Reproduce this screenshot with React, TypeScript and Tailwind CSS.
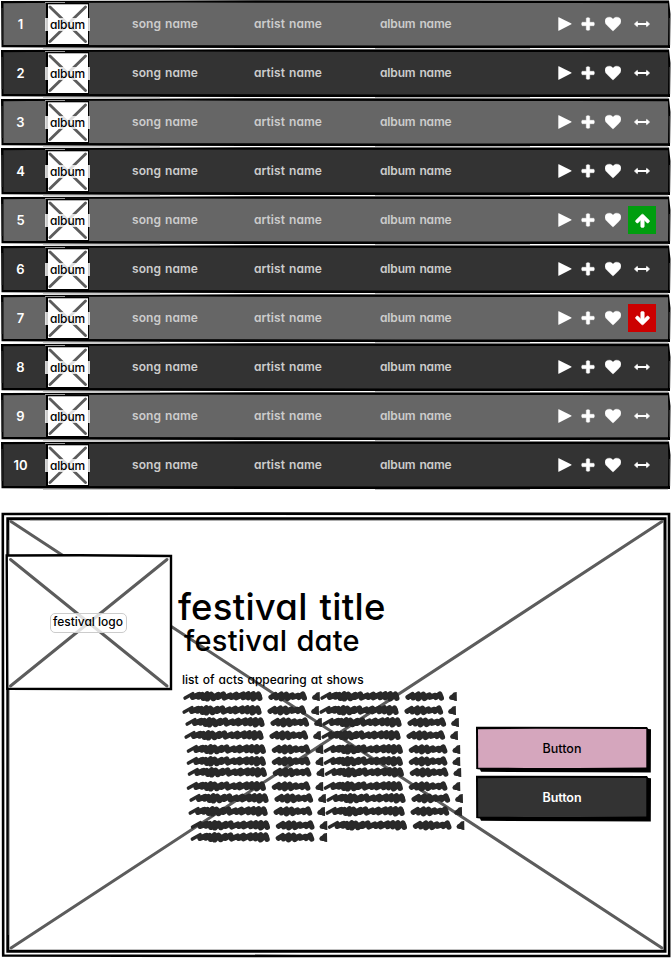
import React from "react";

const HEART =
  "M896 1664q-26 0-44-18l-624-602q-10-8-27.5-26T145 952.5 77 855 23.5 734 0 596q0-220 127-344t351-124q62 0 126.5 21.5t120 58T820 276t76 68q36-36 76-68t95.5-68.5 120-58T1314 128q224 0 351 124t127 344q0 221-229 450l-623 600q-18 18-44 18z";
const PLUS =
  "M1600 736v192q0 40-28 68t-68 28h-416v416q0 40-28 68t-68 28H800q-40 0-68-28t-28-68v-416H288q-40 0-68-28t-28-68V736q0-40 28-68t68-28h416V224q0-40 28-68t68-28h192q40 0 68 28t28 68v416h416q40 0 68 28t28 68z";
const ARROW =
  "M1611 971q0 51-37 90l-75 75q-38 38-91 38-54 0-90-38l-294-293v704q0 52-37.5 84.5T896 1664H768q-53 0-90.5-32.5T640 1547V843l-294 293q-36 38-90 38t-90-38l-75-75q-38-38-38-90 0-53 38-91l651-651q35-37 90-37 54 0 91 37l651 651q37 39 37 91z";

type Trend = "same" | "up" | "down";

const tracks: { rank: number; trend: Trend }[] = [
  { rank: 1, trend: "same" },
  { rank: 2, trend: "same" },
  { rank: 3, trend: "same" },
  { rank: 4, trend: "same" },
  { rank: 5, trend: "up" },
  { rank: 6, trend: "same" },
  { rank: 7, trend: "down" },
  { rank: 8, trend: "same" },
  { rank: 9, trend: "same" },
  { rank: 10, trend: "same" },
];

function AlbumArt() {
  return (
    <div className="relative mt-[2px] h-[44px] w-[45px] shrink-0">
      <svg className="absolute inset-0" width="45" height="44" viewBox="0 0 45 44">
        <rect x="1" y="1" width="43" height="43" fill="#000" />
        <rect x="0" y="0" width="20" height="1" fill="#999" />
        <rect x="3" y="2.3" width="40" height="39.7" fill="#fff" />
        <path d="M5 5L40.5 39.5M40.5 5L5 39.5" stroke="#5c5c5c" strokeWidth="2.9" strokeLinecap="round" />
      </svg>
      <div className="absolute left-0 top-[16px] flex h-[13px] w-[45px] items-center justify-center bg-white/80 text-[12px] font-medium leading-none tracking-[-0.1px] text-black">
        album
      </div>
    </div>
  );
}

function TrendIcon({ trend }: { trend: Trend }) {
  if (trend === "same") {
    return (
      <div className="flex h-[28px] w-[28px] items-center justify-center">
        <svg width="18" height="8" viewBox="0 0 18 8" fill="#fff" stroke="#fff" strokeWidth="1" strokeLinejoin="round">
          <path d="M1.5 4L4.3 1.5V6.5zM16.5 4L13.7 1.5V6.5zM4 3.5H14V4.5H4z" />
        </svg>
      </div>
    );
  }
  return (
    <div className={`flex h-[28px] w-[28px] items-center justify-center ${trend === "up" ? "bg-[#009e0f]" : "bg-[#cc0000]"}`}>
      <svg className={trend === "down" ? "rotate-180" : ""} width="15" height="15" viewBox="0 64 1664 1664" fill="#fff" stroke="#fff" strokeWidth="60">
        <path d={ARROW} />
      </svg>
    </div>
  );
}

function TrackRow({ rank, trend }: { rank: number; trend: Trend }) {
  const fill = rank % 2 ? "#666666" : "#333333";
  return (
    <div className="relative flex h-[49px] w-full">
      <svg className="absolute inset-0" width="671" height="49" viewBox="0 0 671 49">
        <path d="M1 1L120 .7L260 .3L669 .6L670.5 14L670 48L300 48L100 47.8L1.5 47.3z" fill="#000" />
        <path d="M3.5 3.3L30 3L180 2.6L569 3L668 3.3L668.3 20L668 45.2L400 45.5L20 45L3.5 45z" fill={fill} />
        <path d="M43 48.3H160M375 48.5H530M590 48.3H668" stroke="#aaa" strokeWidth=".8" />
        <path d="M2 8V40M669.6 18V45" stroke="#444" strokeWidth=".8" />
      </svg>
      <div className="relative flex w-full text-[12px] font-semibold leading-[18px] text-[#cccccc]">
        <div className="w-[45px] shrink-0 pr-[4px] pt-[15px] text-center text-[13px] text-white">{rank}</div>
        <AlbumArt />
        <div className="ml-[42px] w-[122px] pt-[15px] tracking-[0.05px] [word-spacing:1px]">song name</div>
        <div className="w-[126px] pt-[15px] tracking-[0.05px] [word-spacing:1px]">artist name</div>
        <div className="w-[178px] pt-[15px] tracking-[-0.15px] [word-spacing:1px]">album name</div>
        <svg className="mt-[17px]" width="14" height="14" viewBox="0 0 14 14" fill="#fff">
          <path d="M.3 .5Q.3 0 .8 .2L13.4 6.6Q13.8 7 13.4 7.3L.8 13.8Q.3 14 .3 13.5z" />
        </svg>
        <svg className="ml-[8px] mt-[16px]" width="16" height="16" viewBox="0 -64 1792 1792" fill="#fff" stroke="#fff" strokeWidth="50"><path d={PLUS} /></svg>
        <svg className="ml-[9px] mt-[16px]" width="16" height="16" viewBox="0 0 1792 1792" fill="#fff" stroke="#fff" strokeWidth="40"><path d={HEART} /></svg>
        <div className="ml-[7px] mt-[10px]"><TrendIcon trend={trend} /></div>
      </div>
    </div>
  );
}

const scribbleRows: [number, number, number][] = [
  [183.3, 696, 2],
  [182.4, 710, 2],
  [185.4, 722, 2],
  [184.4, 735, 2],
  [186.7, 749, 2],
  [186.7, 761, 2],
  [187.7, 772, 2],
  [186.7, 786, 2],
  [189.4, 798, 2],
  [188.5, 811, 2],
  [190.8, 825, 2],
  [190.6, 837, 1],
];

function ActName({ x, y }: { x: number; y: number }) {
  return (
    <g transform={`translate(${x} ${y})`} stroke="#292929" fill="none" strokeLinecap="round" strokeLinejoin="round">
      <path strokeWidth="3.6" d="M1.8 2L9.5 -2.3L9 1.5L14 -1.5" />
      <path
        strokeWidth="5.6"
        d="M9.5 1.2L16 -1.3L15 1L19 -1.3L20 2.2L24 -2L24 2.8L28 -1.5L30 2.4L35 -1.4L34.5 1.2L40 -1.8L41 1.8L47 -.8L48 1.2L53 -1.6L53 1.6L60 -1.8L60 1.4L65 -2L65 1.6L70 -2L70 2.8L75 -1.8L76.4 2.2"
      />
      <path strokeWidth="5" d="M18 0H32M63 0H76M92 0H108" />
      <path strokeWidth="5.4" d="M87.8 1.2L92 -1.3L93 1.8L98 -1.8L98 2.8L103 -1.6L104 2.4L109 -1L109.5 1.2L115 -.6L115.5 1.4L119.5 -1.8L121 2" />
      <path stroke="none" fill="#292929" d="M128.6 1.8Q129 -1 131.5 -1.6Q133 -4 136.4 -3.9L136.6 4.9Q134 5 133 4Q129 4.6 128.6 1.8z" />
    </g>
  );
}

function FestivalBackdrop() {
  return (
    <svg className="absolute inset-0" width="671" height="449" viewBox="0 509 671 449">
      <path d="M2.8 514L120 513.8L260 513.6L669 514L669.2 956L300 956L3.2 955.5z" fill="#fff" stroke="#000" strokeWidth="2.6" />
      <path d="M7.8 518.8H665L665 951.3H7.8z" fill="none" stroke="#000" strokeWidth="3" />
      <path d="M8.4 540V935M30 519.8H650M665 540V930" stroke="#555" strokeWidth=".6" />
      <path d="M11 521.5L662 948M662 521.5L11 948" stroke="#5c5c5c" strokeWidth="3" strokeLinecap="round" />
    </svg>
  );
}

function SketchButton({ dark }: { dark?: boolean }) {
  return (
    <button className={`relative block h-[49px] w-[176px] text-[12.5px] leading-none ${dark ? "font-semibold tracking-[-0.1px] text-white" : "font-medium text-black"}`}>
      <svg className="absolute inset-0" width="176" height="49" viewBox="0 0 176 49">
        <path d="M0 .8L171 1L172.3 3L175 3.2L174.8 46.4L5 45.8L4 43.5L.2 43z" fill="#000" />
        <path d="M2 3.2L60 2.7L170.3 3V41.5L100 42L50 41.9L2.2 41.8z" fill={dark ? "#333333" : "#d5a6bd"} />
      </svg>
      <span className="relative -left-[2px] block pb-[2px] text-center">Button</span>
    </button>
  );
}

function FestivalCard() {
  return (
    <section className="relative flex h-[449px] w-full text-black">
      <FestivalBackdrop />
      <div className="relative ml-[5px] mt-[45px] flex h-[137px] w-[168px] shrink-0 items-center justify-center">
        <svg className="absolute inset-0" width="168" height="137" viewBox="5 554 168 137">
          <path d="M6.7 555.5L80 555.3L171 556L171 689L90 689L7.3 688.8z" fill="#fff" stroke="#000" strokeWidth="2.4" />
          <path d="M10.5 559.5L167 686M167 559.5L10.5 686" stroke="#5c5c5c" strokeWidth="3" strokeLinecap="round" />
        </svg>
        <div className="relative right-px flex h-[20px] w-[77px] items-center justify-center rounded-[5px] border border-[#cccccc] bg-white/80 text-[12px] font-medium leading-none">
          <span className="whitespace-nowrap pb-px">festival logo</span>
        </div>
      </div>
      <div className="relative ml-[5px] w-[298px] shrink-0">
        <svg className="absolute left-0 top-[178px]" width="298" height="160" viewBox="178 687 298 160">
          {scribbleRows.map(([x, y, count]) =>
            Array.from({ length: count }, (_, i) => <ActName key={`${y}-${i}`} x={x + i * 137} y={y} />)
          )}
        </svg>
        <h1 className="relative mt-[80px] whitespace-nowrap text-[36.5px] font-medium leading-[36px] tracking-[0.25px] [word-spacing:2px]">festival title</h1>
        <h2 className="relative ml-[6px] mt-[2px] whitespace-nowrap text-[29px] font-medium leading-[28px] tracking-[0.25px] [word-spacing:1px]">festival date</h2>
        <p className="relative ml-[4px] mt-[16px] whitespace-nowrap text-[12px] font-medium leading-[18px] tracking-[0.02px] [word-spacing:0.8px]">list of acts appearing at shows</p>
      </div>
      <div className="relative mt-[217px]">
        <SketchButton />
        <SketchButton dark />
      </div>
    </section>
  );
}

export default function App() {
  return (
    <main className="h-[958px] w-[671px] overflow-hidden bg-white font-['Inter','Open_Sans',sans-serif] [font-feature-settings:'cv11']">
      <div className="flex h-[509px] flex-col">
        {tracks.map((t) => (
          <TrackRow key={t.rank} rank={t.rank} trend={t.trend} />
        ))}
      </div>
      <FestivalCard />
    </main>
  );
}
